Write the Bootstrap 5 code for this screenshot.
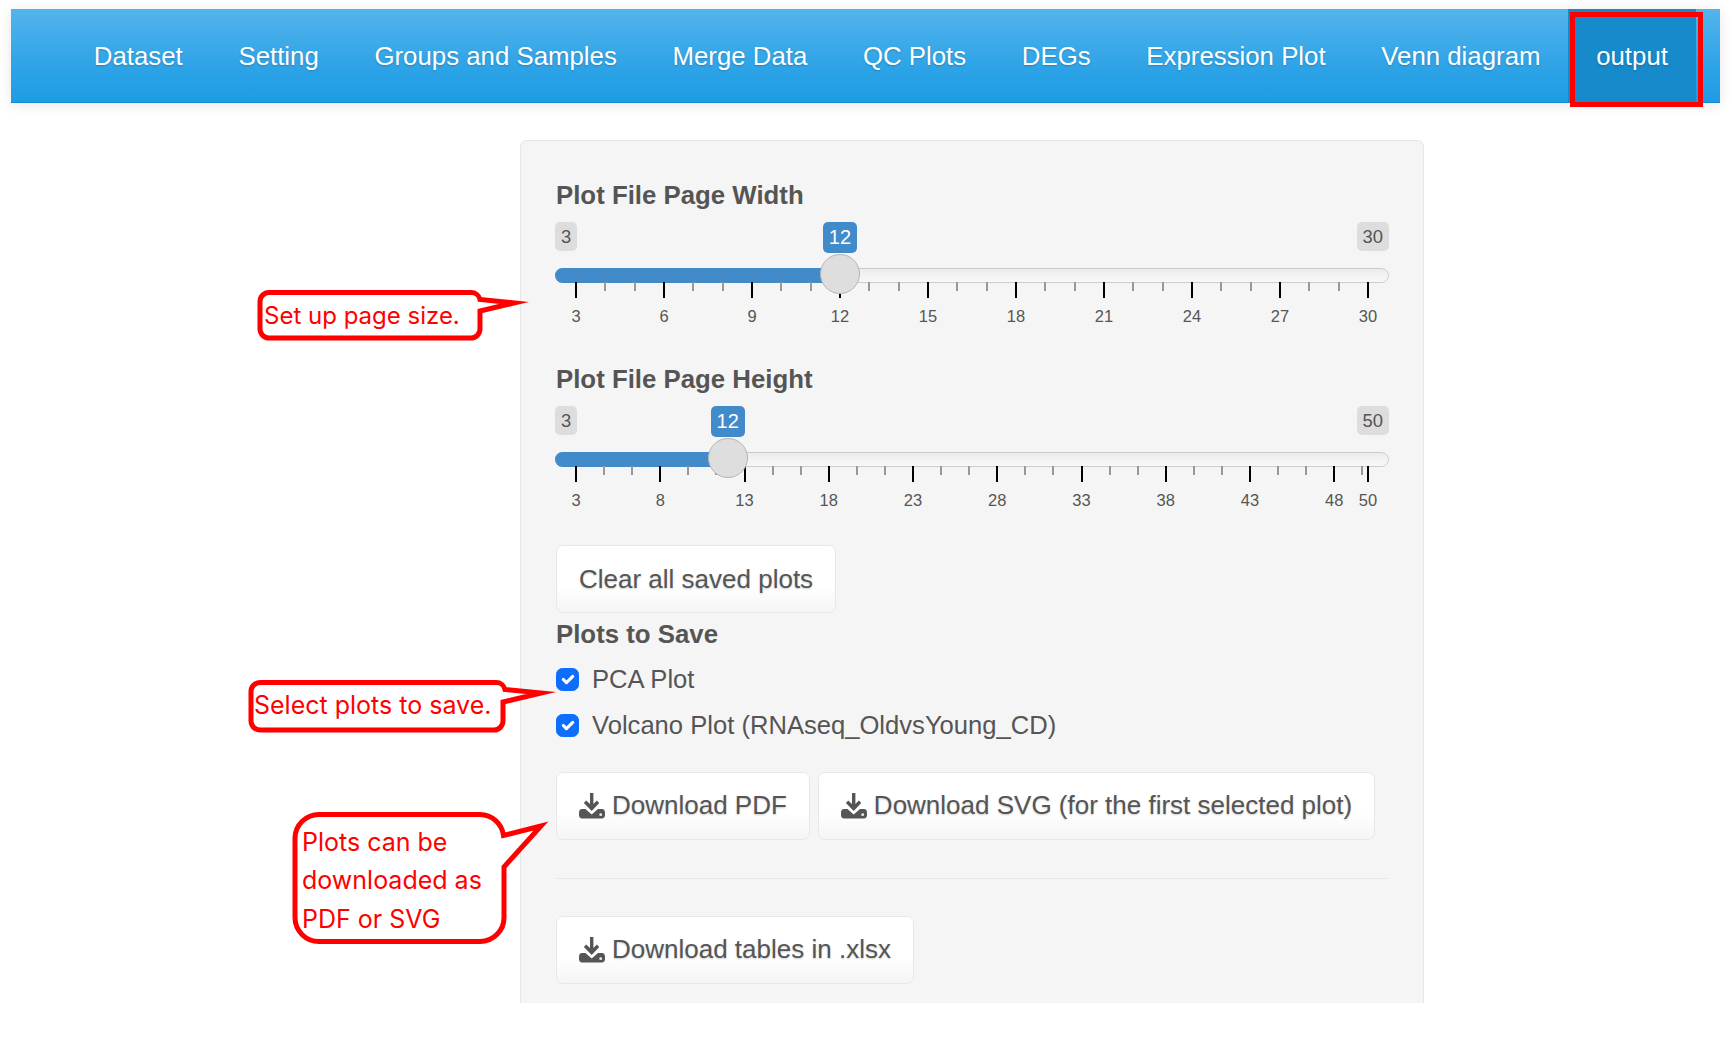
<!DOCTYPE html>
<html lang="en">
<head>
<meta charset="utf-8">
<title>output</title>
<link href="https://cdn.jsdelivr.net/npm/bootstrap@5.3.0/dist/css/bootstrap.min.css" rel="stylesheet">
<style>
html,body{height:100%;overflow:hidden;background:#fff}
body{font-family:"Liberation Sans",Arial,sans-serif;color:#555;font-size:26px}
.page-stage{position:relative;width:1732px;height:1040px;padding-top:9px}
.top-bar{margin-left:11px;width:1709px;height:94px;padding:0 0 0 55px;align-items:stretch;background:linear-gradient(#54b4eb,#2fa4e7 60%,#1d9ce5);border-bottom:1px solid #178acc;box-shadow:0 2px 12px rgba(0,0,0,.1)}
.top-bar .navbar-nav{align-items:stretch}
.top-bar .navbar-nav .nav-link{display:flex;align-items:center;height:100%;padding:2px 27.85px 0;font-size:25.8px;color:#fff;text-shadow:0 1px 2px rgba(0,0,0,.2)}
.top-bar .navbar-nav .nav-link.active{background:#178acc;color:#fff}
.save-panel{margin:37px 0 0 520px;width:904px;height:863px;padding:36px 35px 0;background:#f5f5f5;border:1px solid #e6e6e6;border-bottom:0;border-radius:7px 7px 0 0;overflow:hidden}
.save-label{display:block;font-weight:700;font-size:25.8px;line-height:36px;margin:0 0 -1px;color:#555}
.range-box{position:relative;height:149px;margin-left:-1px;width:834px}
.range-tag{position:absolute;top:10px;height:29px;padding:0 6px;background:#ddd;border-radius:5px;font-size:18.4px;line-height:29px;color:#555}
.range-val{position:absolute;top:10px;height:31px;width:34px;background:#428bca;border-radius:5px;color:#fff;font-size:20px;line-height:31px;text-align:center;transform:translateX(-50%)}
.range-track{position:absolute;left:0;right:0;top:56px;height:15px;background:linear-gradient(#ececec,#f8f8f8);border:1px solid #ccc;border-radius:8px}
.range-fill{position:absolute;left:0;top:56px;height:15px;background:#428bca;border-radius:8px 0 0 8px}
.range-knob{position:absolute;top:42px;width:40px;height:40px;border-radius:50%;background:#dedede;border:1px solid #b5b5b5;transform:translateX(-50%);z-index:2}
.range-tick{position:absolute;top:70px;width:2px;height:16px;background:#000;margin-left:-1px}
.range-tick.sub{height:9px;background:#999;width:2px}
.range-num{position:absolute;top:94px;font-size:16.5px;line-height:20px;color:#555;transform:translateX(-50%)}
.save-btn{display:inline-flex;align-items:center;height:68px;padding:0 22px;font-size:26px;color:#555;background:linear-gradient(#fff,#fff 60%,#f5f5f5);border:1px solid #e8e8e8;border-radius:7px;text-shadow:0 1px 2px rgba(0,0,0,.2)}
.save-btn svg{width:26px;height:26px;margin-right:7px;flex:none}
.plots-head{margin-top:3px}
.check-stack{margin-top:9px}
.check-line{display:flex;align-items:center;min-height:23px;padding:0;margin:0;font-size:25.6px;color:#555}
.check-line .form-check-input{float:none;width:23px;height:23px;margin:0 13px 0 0;flex:none}
.check-gap{margin-top:8px}
.dl-row{display:flex;gap:8px}
.dl-first{margin-top:27px}
.soft-rule{margin:38px 0 37px;border:0;border-top:1px solid #e8e8e8;opacity:1}
.glyph-defs{position:absolute;width:0;height:0}
.callout{position:absolute;left:0;top:0;width:1px;height:1px;overflow:visible;z-index:5}
.callout text{font-family:Inter,"Liberation Sans",sans-serif;font-size:25px;fill:#f00}
.callout text.note-tight{font-size:24px}
.callout path{fill:#fff;stroke:#f00;stroke-width:5;stroke-miterlimit:12;stroke-linejoin:miter}
.mark-box{position:absolute;left:1570px;top:12px;width:133px;height:95px;border:5px solid #f00;z-index:5;pointer-events:none}
</style>
</head>
<body>
<div class="page-stage">
  <svg class="glyph-defs" aria-hidden="true">
    <defs>
      <g id="dl">
        <path fill="#555" d="M11 0h3.4v11l3.5-3.4 2.3 2.4-7.5 8-7.800-8 2.300-2.400L11 11z"/>
        <path fill="#555" d="M3 16h3.500l6.200 5.500 6.300-5.500H23c2 0 3 1.500 3 4v2c0 2-1.300 3.600-3 3.600H3c-1.700 0-3-1.600-3-3.600v-2c0-2.500 1-4 3-4z"/>
        <circle cx="21.7" cy="21.7" r="1.4" fill="#eee"/>
      </g>
    </defs>
  </svg>

  <nav class="navbar navbar-expand top-bar">
    <ul class="navbar-nav">
      <li class="nav-item"><a class="nav-link" href="#">Dataset</a></li>
      <li class="nav-item"><a class="nav-link" href="#">Setting</a></li>
      <li class="nav-item"><a class="nav-link" href="#">Groups and Samples</a></li>
      <li class="nav-item"><a class="nav-link" href="#">Merge Data</a></li>
      <li class="nav-item"><a class="nav-link" href="#">QC Plots</a></li>
      <li class="nav-item"><a class="nav-link" href="#">DEGs</a></li>
      <li class="nav-item"><a class="nav-link" href="#">Expression Plot</a></li>
      <li class="nav-item"><a class="nav-link" href="#">Venn diagram</a></li>
      <li class="nav-item"><a class="nav-link active" href="#">output</a></li>
    </ul>
  </nav>

  <main class="save-panel">
    <label class="save-label">Plot File Page Width</label>
    <div class="range-box" data-min="3" data-max="30" data-val="12" data-step="3" data-zero="21" data-unit="29.33"></div>

    <label class="save-label">Plot File Page Height</label>
    <div class="range-box" data-min="3" data-max="50" data-val="12" data-step="5" data-zero="21" data-unit="16.85"></div>

    <div><button type="button" class="btn save-btn">Clear all saved plots</button></div>

    <label class="save-label plots-head">Plots to Save</label>
    <div class="check-stack">
      <label class="form-check check-line"><input class="form-check-input" type="checkbox" checked>PCA Plot</label>
      <label class="form-check check-line check-gap"><input class="form-check-input" type="checkbox" checked>Volcano Plot (RNAseq_OldvsYoung_CD)</label>
    </div>

    <div class="dl-row dl-first">
      <button type="button" class="btn save-btn"><svg viewBox="0 0 26 26"><use href="#dl"/></svg>Download PDF</button>
      <button type="button" class="btn save-btn"><svg viewBox="0 0 26 26"><use href="#dl"/></svg>Download SVG (for the first selected plot)</button>
    </div>
    <hr class="soft-rule">
    <div class="dl-row">
      <button type="button" class="btn save-btn"><svg viewBox="0 0 26 26"><use href="#dl"/></svg>Download tables in .xlsx</button>
    </div>
  </main>

  <div class="mark-box"></div>

  <svg class="callout">
    <path d="M269 292.500H471a9 9 0 0 1 9 7L514 303 480 311V329a9 9 0 0 1-9 9H269a9 9 0 0 1-9-9V301.500a9 9 0 0 1 9-9z"/>
    <text class="note-tight" x="264" y="324">Set up page size.</text>
    <path d="M260 682.500H496a9 9 0 0 1 9 7L541 693 503 702V721a9 9 0 0 1-9 9H260a9 9 0 0 1-9-9V691.500a9 9 0 0 1 9-9z"/>
    <text x="254" y="714">Select plots to save.</text>
    <path d="M320 814.500H480a24 24 0 0 1 23.500 21L541 826 504 867V917a24 24 0 0 1-24 24.500H320a24 24 0 0 1-25-24.500V839a24 24 0 0 1 25-24.500z"/>
    <text x="302" y="851">Plots can be</text>
    <text x="302" y="889">downloaded as</text>
    <text x="302" y="928">PDF or SVG</text>
  </svg>
</div>

<script>
document.querySelectorAll('.range-box').forEach(function(b){
  var d=b.dataset,min=+d.min,max=+d.max,val=+d.val,step=+d.step,z=+d.zero,u=+d.unit;
  var x=function(v){return z+(v-min)*u};
  var h='<span class="range-tag" style="left:0">'+min+'</span><span class="range-tag" style="right:0">'+max+'</span>';
  h+='<span class="range-val" style="left:'+x(val)+'px">'+val+'</span>';
  h+='<div class="range-track"></div><div class="range-fill" style="width:'+x(val)+'px"></div>';
  h+='<div class="range-knob" style="left:'+x(val)+'px"></div>';
  var v;
  for(v=min;v<=max;v+=step){
    h+='<i class="range-tick" style="left:'+x(v)+'px"></i><span class="range-num" style="left:'+x(v)+'px">'+v+'</span>';
    for(var k=1;k<3;k++){var s=v+k*step/3;if(s<max)h+='<i class="range-tick sub" style="left:'+x(s)+'px"></i>';}
  }
  if((max-min)%step){h+='<i class="range-tick" style="left:'+x(max)+'px"></i><span class="range-num" style="left:'+x(max)+'px">'+max+'</span>';}
  b.innerHTML=h;
});
</script>
<script src="https://cdn.jsdelivr.net/npm/bootstrap@5.3.0/dist/js/bootstrap.bundle.min.js"></script>
</body>
</html>
